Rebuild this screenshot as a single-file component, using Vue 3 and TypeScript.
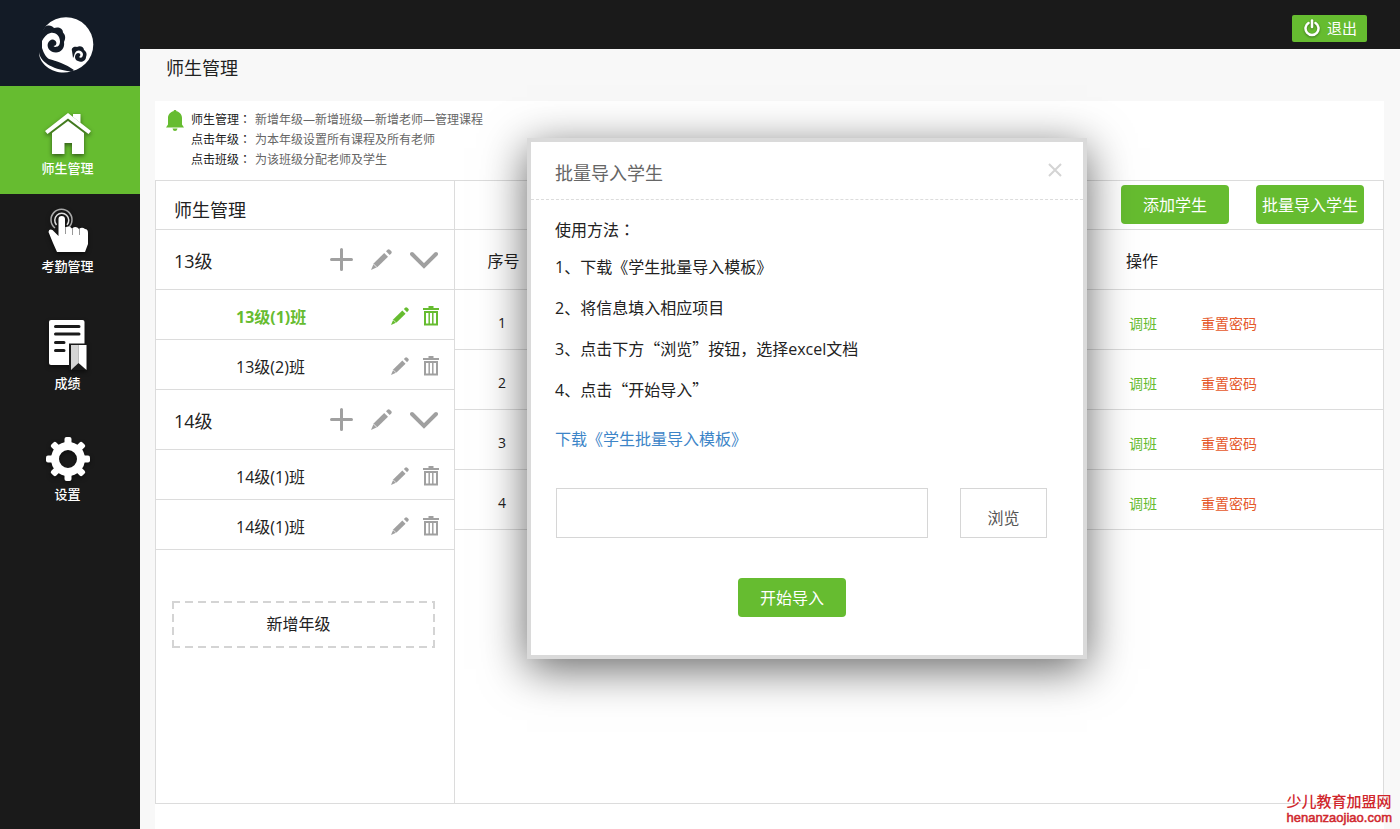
<script setup lang="ts">
import { ref } from 'vue'

interface ClassItem {
  id: number
  name: string
}

interface Grade {
  name: string
  classes: ClassItem[]
}

const grades: Grade[] = [
  { name: '13级', classes: [{ id: 1, name: '13级(1)班' }, { id: 2, name: '13级(2)班' }] },
  { name: '14级', classes: [{ id: 3, name: '14级(1)班' }, { id: 4, name: '14级(1)班' }] },
]

const tips = [
  { label: '师生管理', text: '新增年级—新增班级—新增老师—管理课程' },
  { label: '点击年级', text: '为本年级设置所有课程及所有老师' },
  { label: '点击班级', text: '为该班级分配老师及学生' },
]

const teeth = [0, 45, 90, 135, 180, 225, 270, 315]
const rows = [1, 2, 3, 4]
const activeClass = ref(1)
const filePath = ref('')
const dialogOpen = ref(true)
</script>

<template>
  <div class="layout">
    <aside class="sidebar">
      <div class="logo">
        <svg width="56" height="58" viewBox="0 0 56 58" aria-hidden="true">
          <circle cx="28" cy="28.500" r="27.300" fill="#fff" />
          <path d="M-1 0H20C14 2 9 6 7 11C4 16 4 20 4 24V32C6 38 8 41 11 43C18 45 28 48 36 54L30 58H-1Z" fill="#131b26" />
          <path d="M7 11C10 8.500 14 9.500 16 12C20 10.500 25 12 25 16.500C28 19.500 27.500 23 26 26C27 32 23 36.500 18 36.500C12 36.500 9 32 9.700 28C11 24 14.500 22.500 17 24.500C19.500 26.500 18.500 30 15.500 30C17 32 22 31 22 25.500C22 19.500 17 16 12.500 17C8.500 18 6 21 4 25L3 17Z" fill="#131b26" />
          <path d="M34 35C33 32 36 30 39 31C42 29 46 31 46 34C49 36 49 39 48 41C48 45 43 47 40 45C36 44 36 38 40 37C43 37 43 40 41 41C43 43 45 41 45 38C44 34 39 33 37 37C36 39 36 41 35 42Z" fill="#131b26" />
          <path d="M1 36C2 45 12 53 33 55.500C25 58 15 56 9 51C3 46 1 41 1 36Z" fill="#fff" />
        </svg>
      </div>
      <nav class="nav">
        <a href="#teachers" class="nav-item active">
          <svg class="nav-icon" width="46" height="42" viewBox="0 0 46 42" aria-hidden="true">
            <path d="M28 1H35.500V10L28 4Z" fill="#fff" />
            <path d="M23 0L46 18L43.500 21L23 5.500L2.500 21L0 18Z" fill="#fff" />
            <path d="M23 8L39 20V41H27V30H19.500V41H7V20Z" fill="#fff" />
          </svg>
          <span>师生管理</span>
        </a>
        <a href="#attendance" class="nav-item">
          <svg class="nav-icon" width="42" height="45" viewBox="0 0 42 45" aria-hidden="true">
            <path d="M8 20A10.500 10.500 0 1 1 21 20" fill="none" stroke="#aaa" stroke-width="1.500" />
            <path d="M9.500 17A7 7 0 1 1 20 17" fill="none" stroke="#ddd" stroke-width="1.500" />
            <path d="M11.500 11Q11.500 8 14.700 8T18 11V20Q22 17 25 20.500Q29 17.500 32 21Q35 18.500 38 21Q41 21 41 25V36L38 44H10L6 35L1.500 24Q2 20.500 5.500 22L11.500 28Z" fill="#fff" />
            <path d="M18.500 19V26M25.500 20V27M32.500 21V27" stroke="#999" stroke-width="1" />
          </svg>
          <span>考勤管理</span>
        </a>
        <a href="#scores" class="nav-item">
          <svg class="nav-icon" width="38" height="50" viewBox="0 0 38 50" aria-hidden="true">
            <rect width="35.500" height="45" rx="2" fill="#fff" />
            <path d="M6.500 6.500H30M6.500 14H30M6.500 22.500H15M6.500 30.500H15" stroke="#1a1a1a" stroke-width="3" stroke-linecap="round" />
            <path d="M20 23.500H38V50H20Z" fill="#1a1a1a" />
            <path d="M22 25H29.500V43L22 50Z" fill="#d5d5d5" />
            <path d="M29.500 25H37.500V50L29.500 43Z" fill="#fff" />
          </svg>
          <span>成绩</span>
        </a>
        <a href="#settings" class="nav-item">
          <svg class="nav-icon" width="44" height="44" viewBox="-22 -22 44 44" aria-hidden="true">
            <circle r="13" fill="none" stroke="#fff" stroke-width="8" />
            <rect v-for="angle in teeth" :key="angle" x="-3.500" y="-22" width="7" height="9" rx="2" fill="#fff" :transform="`rotate(${angle})`" />
          </svg>
          <span>设置</span>
        </a>
      </nav>
    </aside>

    <div class="content">
      <header class="topbar">
        <button type="button" class="logout">
          <svg width="16" height="18" viewBox="0 0 16 18" aria-hidden="true">
            <path d="M4.500 4A6.500 6.500 0 1 0 11.500 4" fill="none" stroke="#fff" stroke-width="2.500" stroke-linecap="round" />
            <path d="M8 1.500V8" stroke="#fff" stroke-width="2.500" stroke-linecap="round" />
          </svg>
          退出
        </button>
      </header>
      <h1 class="page-title">师生管理</h1>

      <main class="panel">
        <section class="notice">
          <svg class="bell" width="18" height="22" viewBox="0 0 18 22" aria-hidden="true">
            <path d="M9 0C10 0 10.500 .6 10.500 1.300C14 2 16 5 16 8V14.500L18 17.500H0L2 14.500V8C2 5 4 2 7.500 1.300C7.500 .6 8 0 9 0Z" />
            <path d="M6.500 18.500H11.500Q11 21 9 21T6.500 18.500Z" />
          </svg>
          <dl class="tips">
            <div v-for="tip in tips" :key="tip.label" class="tip">
              <dt>{{ tip.label }}<span class="colon">：</span></dt>
              <dd>{{ tip.text }}</dd>
            </div>
          </dl>
        </section>

        <div class="board">
          <section class="tree">
            <h2 class="tree-title">师生管理</h2>
            <template v-for="grade in grades" :key="grade.name">
              <div class="grade">
                <span class="grade-name">{{ grade.name }}</span>
                <button type="button" class="icon-button" aria-label="新增班级">
                  <svg width="23" height="23" viewBox="0 0 23 23"><path d="M11.500 1.500V21.500M1.500 11.500H21.500" stroke="currentColor" stroke-width="3" stroke-linecap="round" /></svg>
                </button>
                <button type="button" class="icon-button" aria-label="编辑年级">
                  <svg width="21" height="21" viewBox="0 0 21 21" fill="currentColor">
                    <path d="M13.200 4L17 7.800L6.500 18L0 21L2.800 14.300Z" /><path d="M15 2.300L16.500 .8Q17.700 -.2 19 .9L20.200 2Q21.300 3.300 20.200 4.500L18.700 6Z" />
                    <path d="M2.300 14.800L6 18.500" stroke="#fff" stroke-width=".8" />
                  </svg>
                </button>
                <button type="button" class="icon-button" aria-label="展开或收起">
                  <svg width="28" height="18" viewBox="0 0 28 18"><path d="M2 3L14 15L26 3" fill="none" stroke="currentColor" stroke-width="4" stroke-linecap="round" /></svg>
                </button>
              </div>
              <div v-for="item in grade.classes" :key="item.id" class="class-row" :class="{ selected: item.id === activeClass }">
                <button type="button" class="class-name" @click="activeClass = item.id">{{ item.name }}</button>
                <button type="button" class="icon-button" aria-label="编辑班级">
                  <svg width="18" height="18" viewBox="0 0 21 21" fill="currentColor">
                    <path d="M13.200 4L17 7.800L6.500 18L0 21L2.800 14.300Z" /><path d="M15 2.300L16.500 .8Q17.700 -.2 19 .9L20.200 2Q21.300 3.300 20.200 4.500L18.700 6Z" />
                    <path d="M2.300 14.800L6 18.500" stroke="#fff" stroke-width=".8" />
                  </svg>
                </button>
                <button type="button" class="icon-button" aria-label="删除班级">
                  <svg width="16" height="20" viewBox="0 0 16 20" fill="none" stroke="currentColor">
                    <path d="M0 3H16M5.500 1H10.500" stroke-width="2" /><path d="M2 6H14V18.500H2Z" stroke-width="2" /><path d="M6.200 6V18M9.800 6V18" stroke-width="1.500" />
                  </svg>
                </button>
              </div>
            </template>
            <button type="button" class="add-grade">新增年级</button>
          </section>

          <section class="students">
            <div class="toolbar">
              <button type="button" class="primary">添加学生</button>
              <button type="button" class="primary" @click="dialogOpen = true">批量导入学生</button>
            </div>
            <table class="table">
              <colgroup>
                <col class="col-index" />
                <col />
                <col class="col-actions" />
              </colgroup>
              <thead>
                <tr>
                  <th scope="col">序号</th>
                  <td></td>
                  <th scope="col" class="actions-head">操作</th>
                </tr>
              </thead>
              <tbody>
                <tr v-for="row in rows" :key="row">
                  <td class="index">{{ row }}</td>
                  <td></td>
                  <td>
                    <div class="actions">
                      <a href="#move" class="move">调班</a>
                      <a href="#reset" class="reset">重置密码</a>
                    </div>
                  </td>
                </tr>
              </tbody>
            </table>
          </section>
        </div>
      </main>

      <div v-if="dialogOpen" class="dialog" role="dialog" aria-labelledby="dialog-title">
        <div class="dialog-head">
          <h2 id="dialog-title">批量导入学生</h2>
          <button type="button" class="close" aria-label="关闭" @click="dialogOpen = false">
            <svg width="14" height="14" viewBox="0 0 14 14"><path d="M1 1L13 13M13 1L1 13" stroke="currentColor" stroke-width="2" /></svg>
          </button>
        </div>
        <div class="dialog-body">
          <p class="lead">使用方法<span class="colon">：</span></p>
          <ul class="steps">
            <li>1、下载《学生批量导入模板》</li>
            <li>2、将信息填入相应项目</li>
            <li>3、点击下方<span class="quote">“</span>浏览<span class="quote">”</span>按钮，选择excel文档</li>
            <li>4、点击<span class="quote">“</span>开始导入<span class="quote">”</span></li>
          </ul>
          <a href="#template" class="download">下载《学生批量导入模板》</a>
          <div class="file-row">
            <input v-model="filePath" type="text" class="file-input" aria-label="文件路径" />
            <button type="button" class="browse">浏览</button>
          </div>
          <div class="submit-row">
            <button type="button" class="primary">开始导入</button>
          </div>
        </div>
      </div>
    </div>

    <div class="site-mark">
      <span class="site-name">少儿教育加盟网</span>
      <span class="site-url">henanzaojiao.com</span>
    </div>
  </div>
</template>

<style>
body {
  margin: 0;
}
</style>

<style scoped>
.layout {
  --green: #66bc30;
  --line: #dcdcdc;
  position: relative;
  display: grid;
  grid-template-columns: 140px minmax(0, 1fr);
  min-height: 100vh;
  background: #f8f8f8;
  color: #222;
  font-family: "Open Sans", "Noto Sans CJK SC", sans-serif;
  font-size: 16px;
}

.layout * {
  box-sizing: border-box;
}

button,
input {
  margin: 0;
  padding: 0;
  border: 0;
  background: none;
  color: inherit;
  font: inherit;
  cursor: pointer;
}

a {
  color: inherit;
  text-decoration: none;
}

h1,
h2,
p,
ul,
dl,
dd {
  margin: 0;
  padding: 0;
  font-weight: 400;
}

svg {
  display: block;
}

.colon {
  font-family: "Noto Sans CJK JP", sans-serif;
  line-height: 1;
}

.quote {
  font-family: "Noto Sans CJK SC", sans-serif;
  line-height: 1;
}

.sidebar {
  background: #1a1a1a;
}

.logo {
  display: flex;
  align-items: center;
  justify-content: center;
  height: 86px;
  padding-right: 8px;
  padding-top: 4px;
  background: #131b26;
}

.nav-item {
  display: flex;
  flex-direction: column;
  align-items: center;
  gap: 3px;
  padding: 14px 5px 30px 0;
  color: #fff;
  font-size: 13px;
  font-weight: 500;
  line-height: 20px;
}

.nav-item.active {
  padding-top: 27px;
  padding-bottom: 16px;
  background: var(--green);
}

.nav-icon {
  overflow: visible;
  filter: drop-shadow(0 2px 2px rgba(0, 0, 0, 0.5));
}

.content {
  position: relative;
  display: flex;
  flex-direction: column;
  min-width: 0;
}

.topbar {
  display: flex;
  align-items: center;
  justify-content: flex-end;
  height: 49px;
  padding: 8px 33px 0 0;
  background: #1a1a1a;
}

.logout {
  display: flex;
  align-items: center;
  justify-content: center;
  gap: 7px;
  width: 75px;
  height: 27px;
  padding: 0 0 2px 2px;
  border-radius: 2px;
  background: var(--green);
  color: #fff;
  font-size: 15px;
}

.logout svg {
  filter: drop-shadow(0 1px 1px rgba(0, 0, 0, 0.4));
}

.page-title {
  padding: 6px 26px 20px;
  font-size: 18px;
  line-height: 26px;
}

.panel {
  display: flex;
  flex: 1;
  flex-direction: column;
  margin: 0 16px 0 15px;
  padding-bottom: 25px;
  background: #fff;
}

.notice {
  display: flex;
  gap: 7px;
  padding: 9px 11px 10px;
}

.bell {
  fill: var(--green);
}

.tips {
  font-size: 12px;
  line-height: 20px;
}

.tip {
  display: flex;
  gap: 4px;
  height: 20px;
}

.tip dd {
  color: #666;
}

.board {
  display: grid;
  flex: 1;
  grid-template-columns: 299px minmax(0, 1fr);
  border: 1px solid var(--line);
}

.tree {
  border-right: 1px solid var(--line);
}

.tree-title {
  height: 49px;
  padding: 10px 18px 0;
  border-bottom: 1px solid var(--line);
  font-size: 18px;
  line-height: 38px;
}

.grade {
  display: flex;
  align-items: center;
  gap: 18px;
  height: 60px;
  padding: 0 16px 0 18px;
  border-bottom: 1px solid var(--line);
  font-size: 18px;
}

.grade-name {
  flex: 1;
}

.icon-button {
  color: #a0a0a0;
}

.class-row {
  display: flex;
  align-items: center;
  gap: 14px;
  height: 50px;
  padding: 3px 15px 0 80px;
  border-bottom: 1px solid var(--line);
}

.class-name {
  flex: 1;
  text-align: left;
}

.selected,
.selected .icon-button {
  color: var(--green);
}

.selected .class-name {
  font-weight: 700;
}

.add-grade {
  display: block;
  width: calc(100% - 35px);
  height: 47px;
  margin: 51px 19px 0 16px;
  padding: 0 10px 4px 0;
  background:
    repeating-linear-gradient(90deg, #d4d4d4 0 8px, transparent 8px 13px) top / 100% 2px no-repeat,
    repeating-linear-gradient(90deg, #d4d4d4 0 8px, transparent 8px 13px) bottom / 100% 2px no-repeat,
    repeating-linear-gradient(#d4d4d4 0 8px, transparent 8px 13px) left / 2px 100% no-repeat,
    repeating-linear-gradient(#d4d4d4 0 8px, transparent 8px 13px) right / 2px 100% no-repeat;
}

.toolbar {
  display: flex;
  justify-content: flex-end;
  gap: 27px;
  height: 49px;
  padding: 4px 19px 0 0;
  border-bottom: 1px solid var(--line);
}

.primary {
  width: 108px;
  height: 39px;
  padding-bottom: 2px;
  border-radius: 4px;
  background: var(--green);
  color: #fff;
  white-space: nowrap;
}

.table {
  width: 100%;
  border-collapse: separate;
  border-spacing: 0;
  table-layout: fixed;
}

.col-index {
  width: 97px;
}

.col-actions {
  width: 257px;
}

.table th,
.table td {
  height: 60px;
  padding: 0;
  border-bottom: 1px solid var(--line);
  font-weight: 400;
}

.table .actions-head {
  text-align: left;
}

.table .index {
  padding: 6px 3px 0 0;
  font-size: 14px;
  text-align: center;
}

.actions {
  display: flex;
  gap: 44px;
  padding: 6px 0 0 3px;
  font-size: 14px;
}

.move {
  color: var(--green);
}

.reset {
  color: #e5582b;
}

.dialog {
  position: absolute;
  top: 138px;
  left: calc(50% - 243px);
  width: 560px;
  border: 4px solid #dadada;
  background: #fff;
  box-shadow: 0 10px 42px rgba(0, 0, 0, 0.6);
}

.dialog-head {
  display: flex;
  align-items: center;
  justify-content: space-between;
  height: 58px;
  padding: 3px 21px 0 24px;
  border-bottom: 1px dashed var(--line);
  color: #666;
}

.dialog-head h2 {
  font-size: 18px;
}

.close {
  padding-bottom: 4px;
  color: #d4d4d4;
}

.dialog-body {
  padding: 18px 36px 38px 24px;
}

.lead {
  height: 24px;
  line-height: 24px;
}

.steps {
  margin-top: 5px;
  line-height: 41px;
  list-style: none;
}

.steps li {
  height: 41px;
}

.download {
  display: block;
  margin-top: 16px;
  color: #3d85c8;
  line-height: 24px;
}

.file-row {
  display: flex;
  gap: 32px;
  margin: 37px 0 0 1px;
}

.file-input {
  flex: 1;
  min-width: 0;
  height: 50px;
  padding: 0 12px;
  border: 1px solid #d6d6d6;
  cursor: text;
}

.browse {
  width: 87px;
  height: 50px;
  padding-top: 7px;
  border: 1px solid #d6d6d6;
  color: #555;
}

.submit-row {
  display: flex;
  justify-content: center;
  margin-top: 40px;
  padding-right: 18px;
}

.site-mark {
  position: absolute;
  right: 8px;
  bottom: 4px;
  display: flex;
  flex-direction: column;
  color: #d0262c;
  font-weight: 500;
}

.site-name {
  font-size: 15px;
  line-height: 18px;
}

.site-url {
  font-family: "Liberation Sans", Arial, sans-serif;
  font-size: 13px;
  line-height: 15px;
  -webkit-text-stroke: 0.5px currentColor;
}
</style>
